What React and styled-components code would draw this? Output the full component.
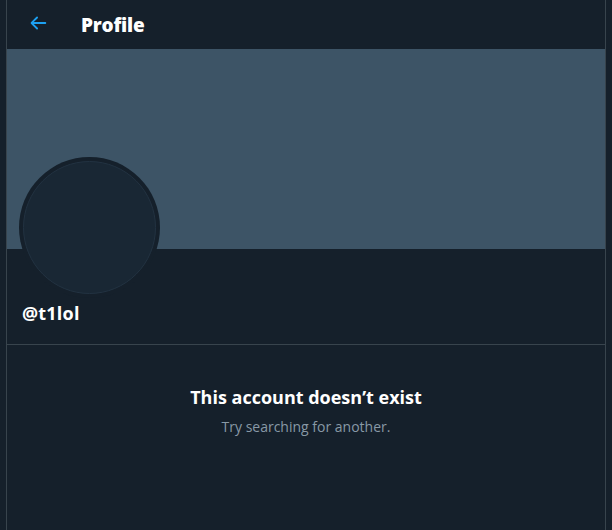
import React from 'react';
import styled, { createGlobalStyle } from 'styled-components';

const GlobalStyle = createGlobalStyle`
    html, body {
        margin: 0;
        padding: 0;
        background: #15202b;
    }
    body {
        font-family: "Open Sans", "Noto Sans", sans-serif;
        color: #ffffff;
    }
`;

export default function App() {
    return (
        <>
            <GlobalStyle />
            <Column>
                <Header>
                    <BackButton aria-label="Back">
                        <svg width="22" height="22" viewBox="0 0 24 24">
                            <path
                                fill="#1da1f2"
                                d="M20 11H7.414l4.293-4.293a1 1 0 0 0-1.414-1.414l-6 6a1 1 0 0 0 0 1.414l6 6a.996.996 0 0 0 1.414 0 1 1 0 0 0 0-1.414L7.414 13H20a1 1 0 1 0 0-2z"
                            />
                        </svg>
                    </BackButton>
                    <HeaderTitle>Profile</HeaderTitle>
                </Header>
                <Banner />
                <ProfileInfo>
                    <Avatar>
                        <AvatarInner />
                    </Avatar>
                    <Handle>@t1lol</Handle>
                </ProfileInfo>
                <Empty>
                    <EmptyTitle>This account doesn’t exist</EmptyTitle>
                    <EmptyText>Try searching for another.</EmptyText>
                </Empty>
            </Column>
        </>
    );
}

const Column = styled.div`
    box-sizing: border-box;
    width: 600px;
    min-height: 530px;
    margin-left: 6px;
    border-left: 1px solid #38444d;
    border-right: 1px solid #38444d;
    display: flex;
    flex-direction: column;
`;

const Header = styled.div`
    height: 49px;
    display: flex;
    align-items: center;
    padding: 0 16px;
    box-sizing: border-box;
`;

const BackButton = styled.div`
    width: 34px;
    height: 34px;
    margin-left: -2px;
    display: flex;
    align-items: center;
    justify-content: center;
    margin-right: 26px;
    margin-top: -4px;
`;

const HeaderTitle = styled.h2`
    margin: 0;
    font-size: 19px;
    font-weight: 800;
    line-height: 24px;
    letter-spacing: -0.2px;
`;

const Banner = styled.div`
    height: 200px;
    background: #3d5466;
`;

const ProfileInfo = styled.div`
    padding: 0 12px;
    border-bottom: 1px solid #38444d;
    padding-bottom: 19px;
`;

const Avatar = styled.div`
    box-sizing: border-box;
    width: 141px;
    height: 141px;
    margin-top: -92px;
    border-radius: 50%;
    background: #15202b;
    padding: 4px;
`;

const AvatarInner = styled.div`
    box-sizing: border-box;
    width: 100%;
    height: 100%;
    border-radius: 50%;
    background: #192734;
    border: 1px solid #223241;
`;

const Handle = styled.div`
    margin-top: 3px;
    padding-left: 3px;
    font-size: 18px;
    font-weight: 700;
    line-height: 24px;
    letter-spacing: 0.2px;
`;

const Empty = styled.div`
    display: flex;
    flex-direction: column;
    align-items: center;
    padding-top: 40px;
`;

const EmptyTitle = styled.div`
    font-size: 18px;
    font-weight: 700;
    line-height: 24px;
`;

const EmptyText = styled.div`
    margin-top: 8px;
    font-size: 14px;
    line-height: 20px;
    color: #8899a6;
`;
